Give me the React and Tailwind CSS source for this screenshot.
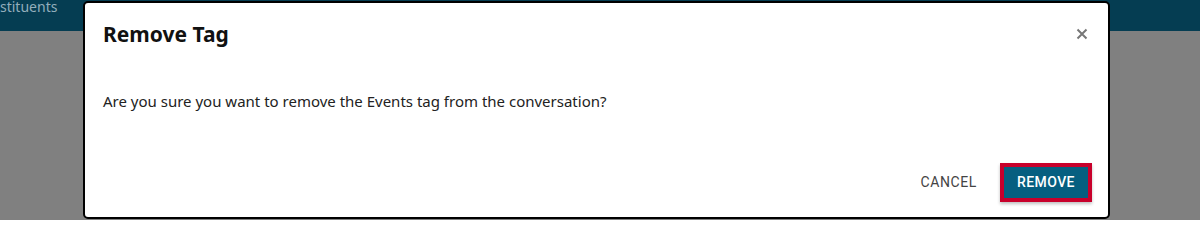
export default function App() {
  return (
    <div className="relative w-[1200px] h-[220px] overflow-hidden bg-[#808080]" style={{ fontFamily: '"Noto Sans", "Open Sans", sans-serif' }}>
      <div className="h-[31px] bg-[#053d52] flex items-start">
        <span className="text-[14px] leading-[18px] -mt-[2px] text-[#93aebb]">stituents</span>
      </div>
      <div className="absolute left-[83px] top-[1px] w-[1027px] h-[218px] bg-white border-2 border-black rounded-[5px] flex flex-col">
        <div className="flex items-center justify-between pl-[18px] pr-[20px] pt-[18px]">
          <h2 className="text-[21px] font-bold leading-[26px] text-[#111]">Remove Tag</h2>
          <svg width="12" height="12" viewBox="0 0 12 12">
            <path d="M1.5 1.5 L10.5 10.5 M10.5 1.5 L1.5 10.5" stroke="#777" strokeWidth="2" />
          </svg>
        </div>
        <p className="pl-[18px] mt-[44px] text-[15px] leading-[20px] text-[#222]">
          Are you sure you want to remove the Events tag from the conversation?
        </p>
        <div className="mt-auto flex items-center justify-end gap-[23px] pr-[16px] pb-[15px]" style={{ fontFamily: 'Roboto, sans-serif' }}>
          <button className="text-[14px] tracking-[0.6px] text-[#444] uppercase">Cancel</button>
          <button className="w-[92px] h-[39px] border-[4px] border-[#c8002b] bg-[#065f80] text-white text-[14px] font-medium tracking-[0.4px] shadow-[0_2px_3px_rgba(0,0,0,0.25)]">REMOVE</button>
        </div>
      </div>
    </div>
  );
}
